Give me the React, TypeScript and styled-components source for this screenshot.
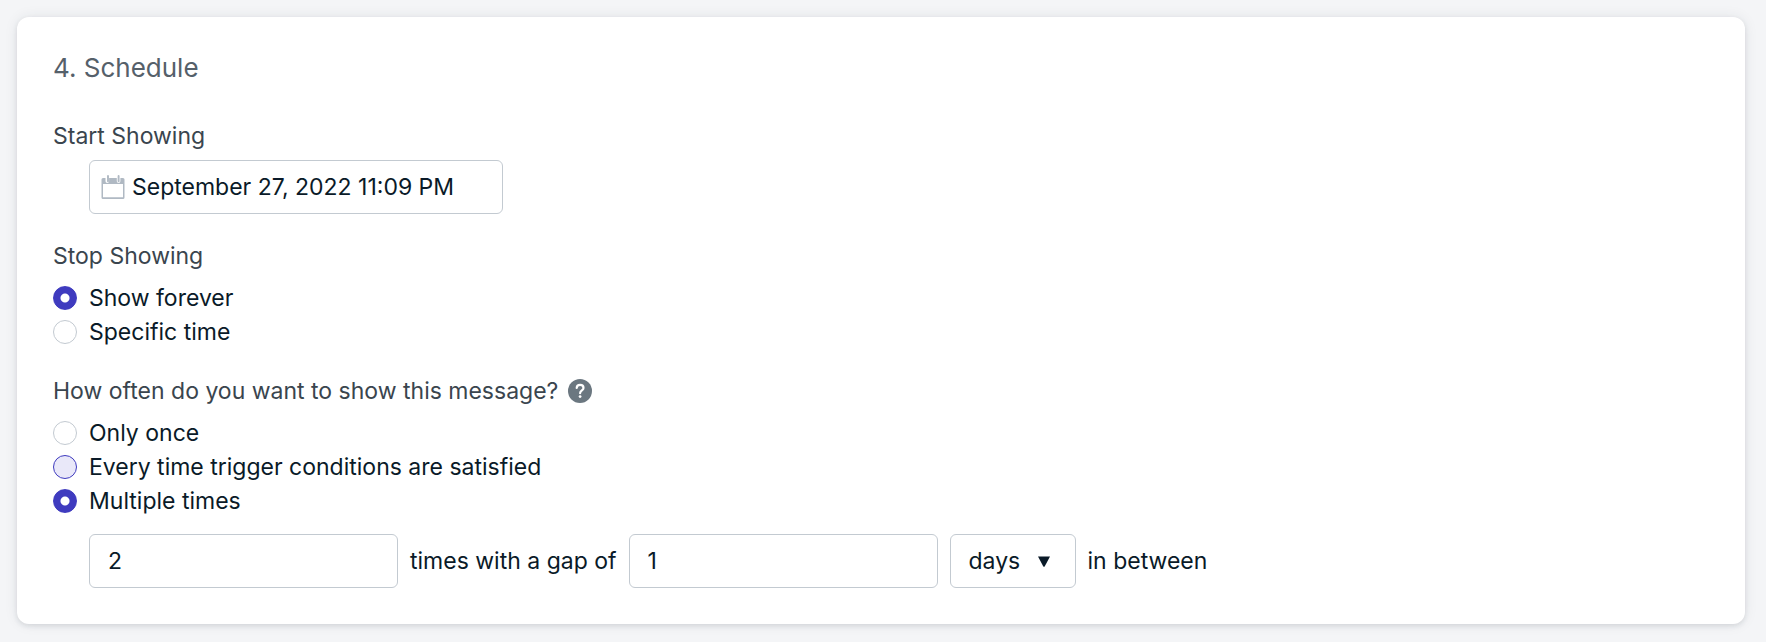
import React, { useState } from "react";
import styled, { createGlobalStyle } from "styled-components";

const ink = "#0a1a28";
const line = "#c3cad1";
const accent = "#3f3bbf";

const GlobalStyle = createGlobalStyle`
  *, *::before, *::after { box-sizing: border-box; }
  body {
    margin: 0;
    background: #f4f5f7;
    color: ${ink};
    font-family: Inter, "Liberation Sans", sans-serif;
    font-size: 23px;
    line-height: 32px;
  }
`;

const Page = styled.main`
  padding: 17px 21px 18px 17px;
`;

const Card = styled.form`
  padding: 36px;
  border-radius: 12px;
  background: #fff;
  box-shadow: 0 2px 5px rgba(39, 49, 65, 0.12), 0 0 14px rgba(39, 49, 65, 0.08);
`;

const Title = styled.h2`
  margin: 0 0 37px;
  color: #55606a;
  font-size: 26px;
  font-weight: 400;
  line-height: 30px;
`;

const Section = styled.section`
  & + & { margin-top: 26px; }
`;

const Group = styled.fieldset`
  min-width: 0;
  margin: 26px 0 0;
  padding: 0;
  border: 0;
`;

const headingStyle = `
  display: flex;
  align-items: center;
  gap: 10px;
  padding: 0;
  color: #3a454e;
`;

const FieldLabel = styled.label`
  ${headingStyle}
  margin-bottom: 8px;
`;

const Legend = styled.legend`
  ${headingStyle}
  margin-bottom: 9px;
`;

const HelpButton = styled.button`
  display: flex;
  padding: 0;
  border: 0;
  border-radius: 50%;
  background: none;
  cursor: pointer;
`;

const DateBox = styled.div`
  display: flex;
  align-items: center;
  gap: 7px;
  width: 414px;
  max-width: 100%;
  height: 54px;
  margin-left: 36px;
  padding: 0 11px;
  border: 1px solid ${line};
  border-radius: 6px;
`;

const DateInput = styled.input`
  flex: 1;
  min-width: 0;
  padding: 0;
  border: 0;
  outline: 0;
  background: none;
  color: inherit;
  font: inherit;
`;

const Options = styled.div`
  display: flex;
  flex-direction: column;
  align-items: flex-start;
`;

const Option = styled.label`
  display: flex;
  align-items: center;
  gap: 12px;
  line-height: 34px;
`;

const Radio = styled.input<{ $highlighted?: boolean }>`
  flex: none;
  appearance: none;
  width: 24px;
  height: 24px;
  margin: 0;
  border: 1px solid ${(p) => (p.$highlighted ? accent : line)};
  border-radius: 50%;
  background: ${(p) => (p.$highlighted ? "#e9e8f9" : "#fff")};

  &:checked {
    border-color: ${accent};
    background: radial-gradient(circle, #fff 4px, ${accent} 5px);
  }
`;

const Repeat = styled.div`
  display: flex;
  flex-wrap: wrap;
  align-items: center;
  gap: 12px;
  margin: 16px 0 0 36px;
`;

const NumberInput = styled.input`
  width: 309px;
  height: 54px;
  padding: 0 18px;
  border: 1px solid ${line};
  border-radius: 6px;
  background: #fff;
  color: inherit;
  font: inherit;
`;

const SelectBox = styled.div`
  position: relative;
`;

const Select = styled.select`
  display: block;
  appearance: none;
  width: 126px;
  height: 54px;
  padding: 0 40px 0 18px;
  border: 1px solid ${line};
  border-radius: 6px;
  background: #fff;
  color: inherit;
  font: inherit;
`;

const Caret = styled.svg`
  position: absolute;
  top: 22px;
  right: 26px;
  pointer-events: none;
`;

function CalendarIcon() {
  return (
    <svg width="24" height="24" viewBox="0 0 24 24" aria-hidden="true">
      <path
        fill="#b0b9c3"
        fillRule="evenodd"
        d="M2 3H22a1.500 1.500 0 0 1 1.500 1.500V22.500A1.500 1.500 0 0 1 22 24H2A1.500 1.500 0 0 1 .5 22.500V4.500A1.500 1.500 0 0 1 2 3zM2 9V22.200H22V9z"
      />
      <path d="M6.300 2V6.300M17.600 2V6.300" stroke="#fff" strokeWidth="3.600" strokeLinecap="round" />
      <path d="M7 1V6.300M17.600 1V6.300" stroke="#b0b9c3" strokeWidth="1.900" strokeLinecap="round" />
    </svg>
  );
}

function HelpIcon() {
  return (
    <svg width="24" height="24" viewBox="0 0 24 24" aria-hidden="true">
      <circle cx="12" cy="12" r="12" fill="#6b7780" />
      <path
        d="M8.700 9C8.800 7 10.200 5.900 12.100 5.900S15.500 7 15.500 9C15.500 11.400 12.100 11.500 12.100 14.200"
        fill="none"
        stroke="#fff"
        strokeWidth="2.200"
        strokeLinecap="round"
      />
      <circle cx="12.100" cy="17.600" r="1.400" fill="#fff" />
    </svg>
  );
}

const stopOptions = ["Show forever", "Specific time"];
const frequencyOptions = [
  "Only once",
  "Every time trigger conditions are satisfied",
  "Multiple times",
];

export default function App() {
  const [stop, setStop] = useState(stopOptions[0]);
  const [frequency, setFrequency] = useState(frequencyOptions[2]);

  return (
    <>
      <GlobalStyle />
      <Page>
        <Card>
          <Title>4. Schedule</Title>
          <Section>
            <FieldLabel htmlFor="start">Start Showing</FieldLabel>
            <DateBox>
              <CalendarIcon />
              <DateInput id="start" defaultValue="September 27, 2022 11:09 PM" />
            </DateBox>
          </Section>
          <Group>
            <Legend>Stop Showing</Legend>
            <Options>
              {stopOptions.map((text) => (
                <Option key={text}>
                  <Radio
                    type="radio"
                    name="stop"
                    checked={stop === text}
                    onChange={() => setStop(text)}
                  />
                  {text}
                </Option>
              ))}
            </Options>
          </Group>
          <Group>
            <Legend>
              How often do you want to show this message?
              <HelpButton type="button" aria-label="Help">
                <HelpIcon />
              </HelpButton>
            </Legend>
            <Options>
              {frequencyOptions.map((text, i) => (
                <Option key={text}>
                  <Radio
                    type="radio"
                    name="frequency"
                    $highlighted={i === 1}
                    checked={frequency === text}
                    onChange={() => setFrequency(text)}
                  />
                  {text}
                </Option>
              ))}
            </Options>
            <Repeat>
              <NumberInput id="count" aria-label="Number of times" defaultValue="2" />
              <label htmlFor="count">times with a gap of</label>
              <NumberInput id="gap" aria-label="Gap" defaultValue="1" />
              <SelectBox>
                <Select id="unit" aria-label="Unit" defaultValue="days">
                  <option>days</option>
                </Select>
                <Caret width="12" height="11" viewBox="0 0 12 11" aria-hidden="true">
                  <path d="M0 0.500H12L6.800 10.300Q6 11.300 5.200 10.300Z" fill={ink} />
                </Caret>
              </SelectBox>
              <label htmlFor="unit">in between</label>
            </Repeat>
          </Group>
        </Card>
      </Page>
    </>
  );
}
